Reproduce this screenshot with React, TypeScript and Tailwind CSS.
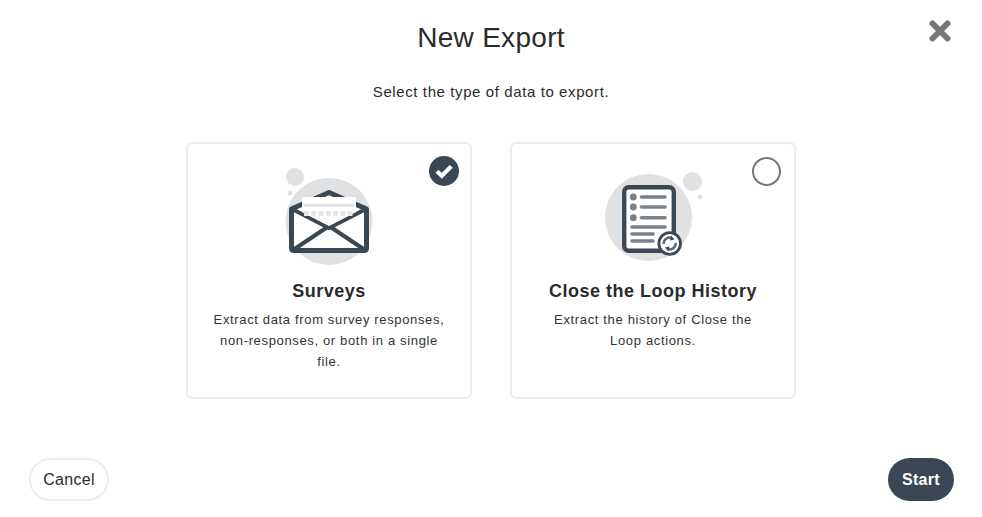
const font = { fontFamily: '"Liberation Sans", Arial, sans-serif' };

function EnvelopeArt() {
  return (
    <svg viewBox="269 168 120 100" className="h-[100px] w-[120px]">
      <circle cx="329" cy="221.5" r="43.5" fill="#e0e1e3" />
      <circle cx="295" cy="177" r="9" fill="#e0e1e3" />
      <circle cx="290" cy="193" r="2.5" fill="#e0e1e3" />
      {/* envelope */}
      <path
        d="M291.5 209 L329 192.5 L366.5 209 V248 Q366.5 250.5 364 250.5 H294 Q291.5 250.5 291.5 248 Z"
        fill="#fff"
        stroke="#3a4856"
        strokeWidth="5"
        strokeLinejoin="round"
      />
      <path d="M292 209 L329 228 L366 209 M293 250 L329 226 L365 250" fill="none" stroke="#3a4856" strokeWidth="4.2" />
      {/* letter */}
      <path d="M302 199 Q302 197 304 197 H354 Q356 197 356 199 V212 L329 226 L302 212 Z" fill="#fff" />
      <rect x="304" y="203.5" width="50" height="3.4" fill="#e3e4e6" />
      {[304, 311, 318.5, 326, 333, 340.5, 347.5].map((x) => (
        <rect key={x} x={x} y="211" width="5" height="5" fill="#e6e7e9" />
      ))}
    </svg>
  );
}

function DocumentArt() {
  return (
    <svg viewBox="593 168 120 100" className="h-[100px] w-[120px]">
      <circle cx="648.5" cy="217.5" r="43.5" fill="#e0e1e3" />
      <circle cx="692.5" cy="181.5" r="9.5" fill="#e0e1e3" />
      <circle cx="700" cy="197" r="2.5" fill="#e0e1e3" />
      <rect x="624.2" y="187.2" width="49.6" height="63.6" rx="4.5" fill="#fff" stroke="#3a4856" strokeWidth="4.4" />
      {[197, 207, 217.7].map((y) => (
        <g key={y}>
          <circle cx="633.3" cy={y} r="3.4" fill="#7a818a" />
          <line x1="641.5" y1={y} x2="665" y2={y} stroke="#7a818a" strokeWidth="3.6" strokeLinecap="round" />
        </g>
      ))}
      <line x1="632" y1="227" x2="665" y2="227" stroke="#7a818a" strokeWidth="3.6" strokeLinecap="round" />
      <line x1="632" y1="234" x2="653" y2="234" stroke="#7a818a" strokeWidth="3.6" strokeLinecap="round" />
      <line x1="632" y1="241" x2="653" y2="241" stroke="#7a818a" strokeWidth="3.6" strokeLinecap="round" />
      <circle cx="669.7" cy="243.5" r="10.8" fill="#fff" stroke="#3a4856" strokeWidth="2.8" />
      <path d="M663.7 244 A6 6 0 0 1 672 238 M675.7 243 A6 6 0 0 1 667.4 249" fill="none" stroke="#5a6570" strokeWidth="2.4" />
      <path d="M671 235.5 L674.5 239.5 L670 240.5 Z M668.4 251.5 L665 247.5 L669.4 246.5 Z" fill="#3a4856" />
    </svg>
  );
}

function ExportCard({
  title,
  description,
  selected,
  art,
}: {
  title: string;
  description: string;
  selected?: boolean;
  art: React.ReactNode;
}) {
  return (
    <div className="relative flex h-[257px] w-[286.5px] flex-col items-center rounded-[6px] border-2 border-[#eaedef] bg-white pt-[24px]">
      {selected ? (
        <div className="absolute right-[11px] top-[12px] flex h-[30px] w-[30px] items-center justify-center rounded-full bg-[#3a4856]">
          <svg viewBox="0 0 20 20" className="h-[22px] w-[22px]">
            <path d="M3.6 10.2 L8 14.4 L16.6 5.8" fill="none" stroke="#fff" strokeWidth="3.8" />
          </svg>
        </div>
      ) : (
        <div className="absolute right-[13px] top-[13px] h-[29px] w-[29px] rounded-full border-2 border-[#777]" />
      )}
      {art}
      <h2 className="mt-[11px] text-[18px] font-bold leading-[24px] tracking-[0.5px] text-[#2b2b2b]">{title}</h2>
      <p className="mt-[6px] w-[233px] text-center text-[13px] leading-[21px] tracking-[0.65px] text-[#333]">
        {description}
      </p>
    </div>
  );
}

export default function App() {
  return (
    <div style={font} className="relative flex h-[517px] w-[982px] flex-col items-center bg-white">
      <button className="absolute left-[928px] top-[19px]" aria-label="Close">
        <svg viewBox="0 0 24 24" className="h-[24px] w-[24px]">
          <path d="M4.5 4.5 L19.5 19.5 M19.5 4.5 L4.5 19.5" stroke="#777" strokeWidth="6" strokeLinecap="round" />
        </svg>
      </button>

      <h1 className="mt-[21px] text-[28px] leading-[34px] tracking-[0.3px] text-[#2b2b2b]">New Export</h1>
      <p className="mt-[26px] text-[15px] leading-[22px] tracking-[0.6px] text-[#2b2b2b]">
        Select the type of data to export.
      </p>

      <div className="mt-[39px] flex gap-[37.5px]">
        <ExportCard
          selected
          title="Surveys"
          description="Extract data from survey responses, non-responses, or both in a single file."
          art={<EnvelopeArt />}
        />
        <ExportCard
          title="Close the Loop History"
          description="Extract the history of Close the Loop actions."
          art={<DocumentArt />}
        />
      </div>

      <div className="mt-auto flex w-full items-start justify-between pb-[16px] pl-[29px] pr-[28px]">
        <button className="h-[43px] w-[80px] rounded-full border-2 border-[#eeeeee] bg-white text-[16px] tracking-[0.3px] text-[#2b2b2b]">
          Cancel
        </button>
        <button className="h-[43px] w-[66px] rounded-full bg-[#3a4856] text-[16px] font-bold tracking-[0.3px] text-white">
          Start
        </button>
      </div>
    </div>
  );
}
